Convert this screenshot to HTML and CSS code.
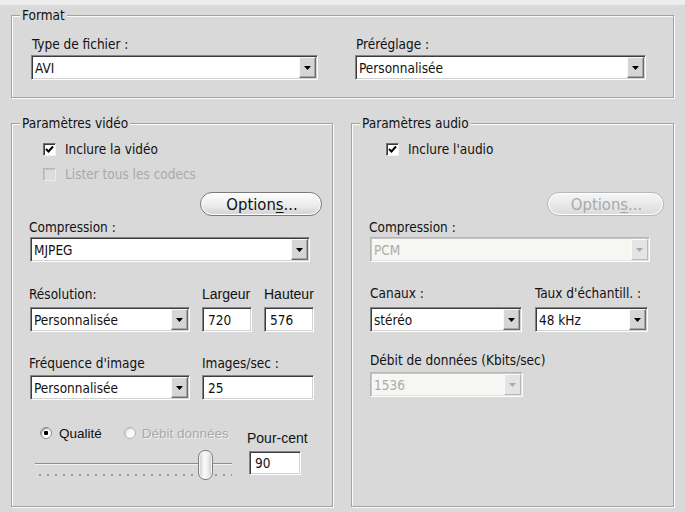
FILE: index.html
```html
<!DOCTYPE html>
<html lang="fr">
<head>
<meta charset="utf-8">
<title>Format</title>
<link rel="stylesheet" href="styles.css">
</head>
<body>
<div class="dialog">
  <section class="group format">
    <span class="group-title">Format</span>
    <div class="format-grid">
      <div class="field">
        <span class="lbl">Type de fichier :</span>
        <div class="combo"><span class="val">AVI</span><span class="drop"><svg width="7" height="4" viewBox="0 0 7 4"><polygon points="0,0 7,0 3.5,4"/></svg></span></div>
      </div>
      <div class="field">
        <span class="lbl">Préréglage :</span>
        <div class="combo"><span class="val">Personnalisée</span><span class="drop"><svg width="7" height="4" viewBox="0 0 7 4"><polygon points="0,0 7,0 3.5,4"/></svg></span></div>
      </div>
    </div>
  </section>

  <div class="columns">
    <section class="group video">
      <span class="group-title">Paramètres vidéo</span>
      <div class="check-row"><span class="cb checked"><svg width="11" height="11" viewBox="0 0 11 11"><polyline points="2,5 4.5,7.5 9,2.5"/></svg></span><span>Inclure la vidéo</span></div>
      <div class="check-row second disabled"><span class="cb"></span><span>Lister tous les codecs</span></div>
      <div class="btn-row"><span class="btn">Option<u>s</u>...</span></div>
      <span class="lbl comp">Compression :</span>
      <div class="combo wide"><span class="val">MJPEG</span><span class="drop"><svg width="7" height="4" viewBox="0 0 7 4"><polygon points="0,0 7,0 3.5,4"/></svg></span></div>

      <div class="res-grid">
        <span class="lbl">Résolution:</span>
        <span class="lbl arial">Largeur</span>
        <span class="lbl arial">Hauteur</span>
        <div class="combo"><span class="val">Personnalisée</span><span class="drop"><svg width="7" height="4" viewBox="0 0 7 4"><polygon points="0,0 7,0 3.5,4"/></svg></span></div>
        <div class="tb">720</div>
        <div class="tb">576</div>
      </div>

      <div class="fps-grid">
        <span class="lbl">Fréquence d'image</span>
        <span class="lbl">Images/sec :</span>
        <div class="combo"><span class="val">Personnalisée</span><span class="drop"><svg width="7" height="4" viewBox="0 0 7 4"><polygon points="0,0 7,0 3.5,4"/></svg></span></div>
        <div class="tb">25</div>
      </div>

      <div class="quality">
        <div class="radios">
          <span class="radio on"></span><span class="rlbl">Qualité</span>
          <span class="radio off"></span><span class="rlbl dis">Débit données</span>
        </div>
        <span class="pct">Pour-cent</span>
        <div class="slider">
          <span class="track"></span>
          <span class="ticks"></span>
          <span class="thumb"></span>
        </div>
        <div class="tb">90</div>
      </div>
    </section>

    <section class="group audio">
      <span class="group-title">Paramètres audio</span>
      <div class="check-row"><span class="cb checked"><svg width="11" height="11" viewBox="0 0 11 11"><polyline points="2,5 4.5,7.5 9,2.5"/></svg></span><span>Inclure l'audio</span></div>
      <div class="btn-row"><span class="btn disabled">Option<u>s</u>...</span></div>
      <span class="lbl comp">Compression :</span>
      <div class="combo wide disabled"><span class="val">PCM</span><span class="drop"><svg width="7" height="4" viewBox="0 0 7 4"><polygon points="0,0 7,0 3.5,4"/></svg></span></div>

      <div class="chan-grid">
        <span class="lbl">Canaux :</span>
        <span class="lbl">Taux d'échantill. :</span>
        <div class="combo"><span class="val">stéréo</span><span class="drop"><svg width="7" height="4" viewBox="0 0 7 4"><polygon points="0,0 7,0 3.5,4"/></svg></span></div>
        <div class="combo"><span class="val">48 kHz</span><span class="drop"><svg width="7" height="4" viewBox="0 0 7 4"><polygon points="0,0 7,0 3.5,4"/></svg></span></div>
      </div>

      <span class="lbl rate">Débit de données (Kbits/sec)</span>
      <div class="combo small disabled"><span class="val">1536</span><span class="drop"><svg width="7" height="4" viewBox="0 0 7 4"><polygon points="0,0 7,0 3.5,4"/></svg></span></div>
    </section>
  </div>
</div>
</body>
</html>
```

FILE: styles.css
```css
* { box-sizing: border-box; }
html, body { margin: 0; }
body {
  width: 685px;
  height: 512px;
  overflow: hidden;
  background: linear-gradient(#ededed 0, #ededed 5px, #d9d9d9 5px);
  font-family: "DejaVu Sans Condensed", "DejaVu Sans", sans-serif;
  font-stretch: condensed;
  font-size: 13.5px;
  color: #111;
}
.dialog { padding: 15px 11px 0 11px; }

.group {
  position: relative;
  border: 1px solid #a2a2a2;
  box-shadow: inset 1px 1px 0 #fbfbfb, 1px 1px 0 #fbfbfb;
}
.group-title {
  position: absolute;
  left: 8px;
  top: -9px;
  padding: 0 2px;
  height: 16px;
  line-height: 16px;
  background: #d9d9d9;
  white-space: nowrap;
}

.lbl { display: block; height: 16px; line-height: 16px; white-space: nowrap; }
.arial { font-family: "Liberation Sans", Arial, sans-serif; font-size: 14px; font-stretch: normal; }

/* Format */
.format { padding: 20px 27px 17px 19px; }
.format-grid { display: grid; grid-template-columns: 287px 291px; column-gap: 37px; }
.field .lbl { margin: 0 0 3px 1px; }

/* Combos */
.combo {
  display: flex;
  align-items: stretch;
  height: 25px;
  background: #fff;
  border: 1px solid;
  border-color: #858585 #fdfdfd #fdfdfd #858585;
  box-shadow: inset 1px 1px 0 #3c3c3c, inset -1px -1px 0 #d2d2d2;
  padding: 1px 1px 1px 3px;
}
.combo .val { flex: 1; display: flex; align-items: center; white-space: nowrap; }
.drop {
  width: 17px;
  background: #d6d6d6;
  border: 1px solid;
  border-color: #f7f7f7 #6c6c6c #6c6c6c #f7f7f7;
  box-shadow: inset -1px -1px 0 #a6a6a6;
  display: flex;
  align-items: center;
  justify-content: center;
}
.drop svg { fill: #000; }
.combo.disabled {
  background: #f6f6f3;
  border-color: #b4b4b4 #fdfdfd #fdfdfd #b4b4b4;
  box-shadow: inset 1px 1px 0 #c8c8c8, inset -1px -1px 0 #e4e4e4;
  color: #acacac;
}
.combo.disabled .drop {
  background: #e4e4e4;
  border-color: #fafafa #b8b8b8 #b8b8b8 #fafafa;
  box-shadow: none;
}
.combo.disabled .drop svg { fill: #a9a9a9; }

.tb {
  height: 25px;
  background: #fff;
  border: 1px solid;
  border-color: #858585 #fdfdfd #fdfdfd #858585;
  box-shadow: inset 1px 1px 0 #3c3c3c, inset -1px -1px 0 #d2d2d2;
  padding-left: 5px;
  display: flex;
  align-items: center;
}

/* Columns */
.columns {
  display: grid;
  grid-template-columns: 322px 323px;
  column-gap: 18px;
  margin-top: 25px;
}
.video, .audio { height: 384px; }
.video { padding: 17px 10px 0 18px; }
.audio { padding: 17px 9px 0 18px; }

.check-row { display: flex; align-items: center; height: 16px; gap: 9px; margin-left: 13px; }
.audio .check-row { margin-left: 16px; }
.check-row.second { margin-top: 9px; }
.cb {
  width: 13px;
  height: 13px;
  background: #fff;
  border: 1px solid;
  border-color: #707070 #f2f2f2 #f2f2f2 #707070;
  box-shadow: inset 1px 1px 0 #3a3a3a;
  display: flex;
  align-items: center;
  justify-content: center;
}
.cb svg { fill: none; stroke: #000; stroke-width: 2; }
.disabled .cb { background: #dcdcdc; border-color: #b6b6b6 #ececec #ececec #b6b6b6; box-shadow: inset 1px 1px 0 #c6c6c6; }
.check-row.disabled { color: #a9a9a9; }

.btn-row { display: flex; justify-content: flex-end; margin-top: 10px; }
.audio .btn-row { margin-top: 35px; }
.btn {
  width: 122px;
  height: 24px;
  border: 1px solid #7a7a7a;
  border-radius: 12px;
  background: linear-gradient(#fdfdfd, #ececec 55%, #d2d2d2);
  box-shadow: inset 0 0 0 1px #ffffff;
  display: flex;
  align-items: center;
  justify-content: center;
  font-size: 16.5px;
  padding-left: 2px;
}
.btn u { text-decoration-thickness: 1px; text-underline-offset: 2px; }
.audio .btn { width: 117px; }
.btn.disabled {
  border-color: #b6b6b6;
  color: #a9a9a9;
  background: linear-gradient(#f6f6f6, #e6e6e6 60%, #dadada);
}

.lbl.comp { margin-top: 3px; margin-left: -1px; }
.combo.wide { margin-top: 2px; width: 280px; }

.res-grid {
  display: grid;
  grid-template-columns: 160px 50px 50px;
  column-gap: 12px;
  row-gap: 5px;
  margin-top: 24px;
}
.res-grid > .lbl:first-child, .fps-grid > .lbl:first-child { margin-left: -1px; }

.fps-grid {
  display: grid;
  grid-template-columns: 160px 112px;
  column-gap: 12px;
  row-gap: 4px;
  margin-top: 23px;
}

.quality {
  display: grid;
  grid-template-columns: 212px 52px;
  column-gap: 7px;
  margin-top: 25px;
  row-gap: 5px;
}
.radios { display: flex; align-items: center; height: 16px; margin-left: 10px; font-family: "Liberation Sans", Arial, sans-serif; font-stretch: normal; font-size: 13.5px; }
.radio {
  width: 12px;
  height: 12px;
  border-radius: 50%;
  flex: none;
}
.radio.on {
  background: radial-gradient(circle, #000 0 2px, #fff 2.5px);
  border: 1px solid #8c8c8c;
  box-shadow: inset 1px 1px 1px #9a9a9a;
}
.radio.off {
  background: #f8f8f8;
  border: 1px solid #b2b2b2;
  box-shadow: inset 1px 1px 1px #cfcfcf;
  margin-left: 22px;
}
.rlbl { margin-left: 7px; }
.rlbl.dis { margin-left: 6px; color: #a9a9a9; text-shadow: 1px 1px 0 #f0f0f0; }
.pct { font-family: "Liberation Sans", Arial, sans-serif; font-stretch: normal; font-size: 14px; height: 16px; line-height: 16px; margin-top: 5px; margin-left: -2px; white-space: nowrap; }

.slider { position: relative; height: 30px; margin-top: -1px; margin-left: 5px; width: 197px; }
.track { position: absolute; left: 0; right: 0; top: 13px; height: 2px; border-top: 1px solid #8e8e8e; border-bottom: 1px solid #f2f2f2; }
.ticks {
  position: absolute; left: 1px; right: 0; top: 24px; height: 2px;
  background: radial-gradient(circle, #9a9a9a 0 0.8px, transparent 1.2px) 0 0 / 8px 2px repeat-x;
}
.thumb {
  position: absolute;
  left: 163px;
  top: 0;
  width: 15px;
  height: 30px;
  border: 1px solid #7e7e7e;
  border-radius: 7px;
  background: linear-gradient(90deg, #c9c9c9, #fbfbfb 40%, #eeeeee 70%, #c4c4c4);
  box-shadow: inset 0 0 0 1px #f4f4f4;
}
.quality .tb { height: 24px; }

.chan-grid {
  display: grid;
  grid-template-columns: 152px 113px;
  column-gap: 13px;
  row-gap: 6px;
  margin-top: 23px;
}
.lbl.rate { margin-top: 20px; }
.combo.small { width: 153px; margin-top: 4px; }
```
